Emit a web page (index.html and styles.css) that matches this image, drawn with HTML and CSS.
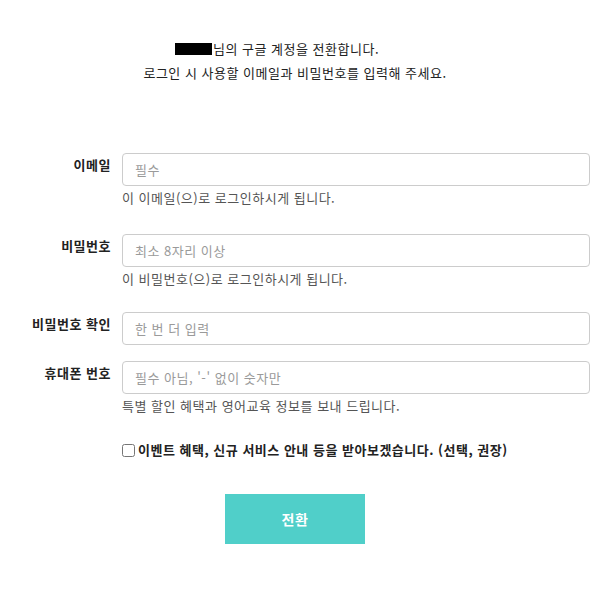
FILE: index.html
```html
<!DOCTYPE html>
<html lang="ko">
<head>
<meta charset="utf-8">
<link rel="stylesheet" href="styles.css">
</head>
<body>
<div class="page">
  <div class="intro">
    <p class="intro-line intro-first"><span class="masked"></span>님의 구글 계정을 전환합니다.</p>
    <p class="intro-line">로그인 시 사용할 이메일과 비밀번호를 입력해 주세요.</p>
  </div>
  <form class="form">
    <div class="field field-email">
      <label class="label">이메일</label>
      <div class="control">
        <input class="input" type="text" placeholder="필수">
        <p class="help">이 이메일(으)로 로그인하시게 됩니다.</p>
      </div>
    </div>
    <div class="field field-pw">
      <label class="label">비밀번호</label>
      <div class="control">
        <input class="input" type="password" placeholder="최소 8자리 이상">
        <p class="help">이 비밀번호(으)로 로그인하시게 됩니다.</p>
      </div>
    </div>
    <div class="field field-confirm">
      <label class="label">비밀번호 확인</label>
      <div class="control">
        <input class="input" type="password" placeholder="한 번 더 입력">
      </div>
    </div>
    <div class="field field-phone">
      <label class="label">휴대폰 번호</label>
      <div class="control">
        <input class="input" type="text" placeholder="필수 아님, '-' 없이 숫자만">
        <p class="help">특별 할인 혜택과 영어교육 정보를 보내 드립니다.</p>
      </div>
    </div>
    <div class="agree">
      <label class="agree-label"><input class="checkbox" type="checkbox">이벤트 혜택, 신규 서비스 안내 등을 받아보겠습니다. (선택, 권장)</label>
    </div>
    <div class="actions">
      <button class="submit" type="button">전환</button>
    </div>
  </form>
</div>
</body>
</html>
```

FILE: styles.css
```css
* { box-sizing: border-box; }
html, body { margin: 0; padding: 0; background: #fff; }
body {
  font-family: "Noto Sans CJK KR", "Noto Sans", sans-serif;
  font-size: 13px;
  letter-spacing: 0.5px;
  color: #222;
}
.page { width: 590px; padding-top: 37px; }
.intro { text-align: center; }
.intro-line { margin: 0; line-height: 24px; color: #222; }
.intro-first { padding-right: 36px; }
.masked {
  display: inline-block;
  width: 37px;
  height: 12px;
  background: #000;
  vertical-align: -1px;
  margin-right: 1px;
}
.form { margin-top: 68px; }
.field { display: flex; gap: 11px; }
.field-email { margin-bottom: 24px; }
.field-pw { margin-bottom: 21px; }
.field-confirm { margin-bottom: 16px; }
.label {
  width: 111px;
  flex: none;
  text-align: right;
  font-weight: 700;
  line-height: 24px;
  color: #222;
}
.control { flex: 1; }
.input {
  display: block;
  width: 100%;
  height: 33px;
  border: 1px solid #ccc;
  border-radius: 4px;
  padding: 0 12px;
  font-family: inherit;
  font-size: 13px;
  letter-spacing: 0.5px;
  color: #333;
  background: #fff;
}
.input::placeholder { color: #9a9a9a; }
.help { margin: 0; line-height: 24px; color: #555; }
.agree { margin-top: 20px; padding-left: 122px; line-height: 24px; }
.agree-label { font-weight: 700; color: #222; display: inline-flex; align-items: center; }
.checkbox { margin: 0 3px 0 0; width: 13px; height: 13px; }
.actions { margin-top: 30px; display: flex; justify-content: center; }
.submit {
  width: 140px;
  height: 50px;
  border: 0;
  border-radius: 0;
  background: #50cfc9;
  color: #fff;
  font-family: inherit;
  font-size: 14px;
  font-weight: 700;
  letter-spacing: 0.5px;
}
```
